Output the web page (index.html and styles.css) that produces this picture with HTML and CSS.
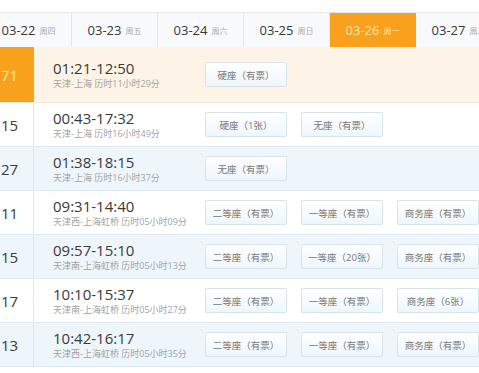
FILE: index.html
```html
<!DOCTYPE html>
<html lang="zh-CN">
<head>
  <meta charset="UTF-8" />
  <meta name="viewport" content="width=device-width, initial-scale=1" />
  <title>车次列表</title>
  <link rel="stylesheet" href="styles.css">
</head>
<body>
  <!-- date tabs -->
  <div class="date-tabs">
    <div class="date-tab"><span class="day">03-22</span><span class="week">周四</span></div>
    <div class="date-tab"><span class="day">03-23</span><span class="week">周五</span></div>
    <div class="date-tab"><span class="day">03-24</span><span class="week">周六</span></div>
    <div class="date-tab"><span class="day">03-25</span><span class="week">周日</span></div>
    <div class="date-tab active"><span class="day">03-26</span><span class="week">周一</span></div>
    <div class="date-tab"><span class="day">03-27</span><span class="week">周二</span></div>
  </div>

  <!-- train list -->
  <div class="train-list">
    <div class="train-row current">
      <div class="train-no">71</div>
      <div class="train-info">
        <div class="time">01:21-12:50</div>
        <div class="route">天津-上海 历时11小时29分</div>
      </div>
      <div class="seats">
        <span class="seat">硬座（有票）</span>
      </div>
    </div>

    <div class="train-row">
      <div class="train-no">15</div>
      <div class="train-info">
        <div class="time">00:43-17:32</div>
        <div class="route">天津-上海 历时16小时49分</div>
      </div>
      <div class="seats">
        <span class="seat">硬座（1张）</span>
        <span class="seat">无座（有票）</span>
      </div>
    </div>

    <div class="train-row blue">
      <div class="train-no">27</div>
      <div class="train-info">
        <div class="time">01:38-18:15</div>
        <div class="route">天津-上海 历时16小时37分</div>
      </div>
      <div class="seats">
        <span class="seat">无座（有票）</span>
      </div>
    </div>

    <div class="train-row">
      <div class="train-no">11</div>
      <div class="train-info">
        <div class="time">09:31-14:40</div>
        <div class="route">天津西-上海虹桥 历时05小时09分</div>
      </div>
      <div class="seats">
        <span class="seat">二等座（有票）</span>
        <span class="seat">一等座（有票）</span>
        <span class="seat">商务座（有票）</span>
      </div>
    </div>

    <div class="train-row blue">
      <div class="train-no">15</div>
      <div class="train-info">
        <div class="time">09:57-15:10</div>
        <div class="route">天津南-上海虹桥 历时05小时13分</div>
      </div>
      <div class="seats">
        <span class="seat">二等座（有票）</span>
        <span class="seat">一等座（20张）</span>
        <span class="seat">商务座（有票）</span>
      </div>
    </div>

    <div class="train-row">
      <div class="train-no">17</div>
      <div class="train-info">
        <div class="time">10:10-15:37</div>
        <div class="route">天津南-上海虹桥 历时05小时27分</div>
      </div>
      <div class="seats">
        <span class="seat">二等座（有票）</span>
        <span class="seat">一等座（有票）</span>
        <span class="seat">商务座（6张）</span>
      </div>
    </div>

    <div class="train-row blue">
      <div class="train-no">13</div>
      <div class="train-info">
        <div class="time">10:42-16:17</div>
        <div class="route">天津西-上海虹桥 历时05小时35分</div>
      </div>
      <div class="seats">
        <span class="seat">二等座（有票）</span>
        <span class="seat">一等座（有票）</span>
        <span class="seat">商务座（有票）</span>
      </div>
    </div>
  </div>
</body>
</html>
```

FILE: styles.css
```css
/* page base */
body {
  margin: 0;
  padding-top: 12px;
  background: #fff;
  color: #333;
  font-family: "Open Sans", "Noto Sans CJK SC", sans-serif;
  overflow: hidden;
}

/* date tabs bar */
.date-tabs {
  display: flex;
  margin-left: -14px;
  height: 35px;
  background: #f7f9fa;
  border-top: 1px solid #e6e8ea;
  box-sizing: border-box;
}

.date-tab {
  flex: 0 0 86px;
  box-sizing: border-box;
  border-right: 1px solid #e4e6e8;
  display: flex;
  align-items: center;
  justify-content: center;
  white-space: nowrap;
}

.date-tab .day {
  font-size: 13px;
  color: #383838;
}

.date-tab .week {
  font-size: 8px;
  color: #aaa;
  margin-left: 4px;
}

.date-tab.active {
  background: #f9a11c;
  border-right-color: #f9a11c;
}

.date-tab.active .day,
.date-tab.active .week {
  color: #fde3a6;
}

/* train rows */
.train-row {
  display: flex;
  align-items: center;
  height: 44px;
  box-sizing: border-box;
  border-bottom: 1px solid #dfeaf2;
  background: #fff;
}

.train-row.blue {
  background: #eef6fc;
}

.train-row.current {
  height: 56px;
  background: #fdf3e6;
  border-bottom-color: #f1e6d8;
}

.train-no {
  flex: 0 0 34px;
  align-self: stretch;
  box-sizing: border-box;
  border-right: 1px solid #dbe8f1;
  display: flex;
  align-items: center;
  font-size: 15px;
  color: #3a3a3a;
  padding-left: 1px;
}

.train-row.current .train-no {
  background: #f8a11d;
  border-right-color: #f8a11d;
  color: #fde4b4;
}

.train-info {
  flex: 0 0 170px;
  box-sizing: border-box;
  padding-left: 19px;
}

.time {
  font-size: 15px;
  line-height: 18px;
  color: #3a3a3a;
}

.route {
  font-size: 9px;
  line-height: 14px;
  color: #a3a3a3;
  white-space: nowrap;
}

.seats {
  display: flex;
  gap: 14px;
  padding-left: 1px;
}

.seat {
  flex: 0 0 82px;
  height: 25px;
  box-sizing: border-box;
  border: 1px solid #d8e4ec;
  border-radius: 2px;
  background: linear-gradient(#fff, #eef6fc);
  display: flex;
  align-items: center;
  justify-content: center;
  font-size: 9.5px;
  color: #777;
  white-space: nowrap;
}
```
